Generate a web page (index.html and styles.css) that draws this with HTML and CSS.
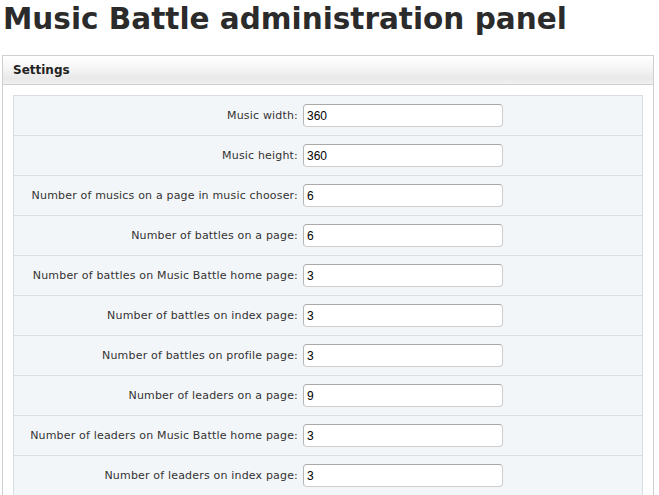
FILE: index.html
```html
<!DOCTYPE html>
<html lang="en">
<head>
    <meta charset="UTF-8">
    <title>Music Battle administration panel</title>
    <link rel="stylesheet" href="styles.css">
</head>
<body>

<h1 class="titulo">Music Battle administration panel</h1>

<div class="panel">
    <div class="panel-cabecera">Settings</div>
    <div class="panel-cuerpo">
        <div class="tabla">
            <div class="fila">
                <label for="w">Music width:</label>
                <input type="text" id="w" value="360">
            </div>
            <div class="fila">
                <label for="h">Music height:</label>
                <input type="text" id="h" value="360">
            </div>
            <div class="fila">
                <label for="c1">Number of musics on a page in music chooser:</label>
                <input type="text" id="c1" value="6">
            </div>
            <div class="fila">
                <label for="c2">Number of battles on a page:</label>
                <input type="text" id="c2" value="6">
            </div>
            <div class="fila">
                <label for="c3">Number of battles on Music Battle home page:</label>
                <input type="text" id="c3" value="3">
            </div>
            <div class="fila">
                <label for="c4">Number of battles on index page:</label>
                <input type="text" id="c4" value="3">
            </div>
            <div class="fila">
                <label for="c5">Number of battles on profile page:</label>
                <input type="text" id="c5" value="3">
            </div>
            <div class="fila">
                <label for="c6">Number of leaders on a page:</label>
                <input type="text" id="c6" value="9">
            </div>
            <div class="fila">
                <label for="c7">Number of leaders on Music Battle home page:</label>
                <input type="text" id="c7" value="3">
            </div>
            <div class="fila">
                <label for="c8">Number of leaders on index page:</label>
                <input type="text" id="c8" value="3">
            </div>
        </div>
    </div>
</div>

</body>
</html>
```

FILE: styles.css
```css
body {
    font-family: "DejaVu Sans", Verdana, sans-serif;
    margin: 0;
    padding: 0 2px;
    background-color: white;
    color: #333;
}
.titulo {
    font-size: 29.5px;
    line-height: 34px;
    margin: 0 0 19px 1px;
    padding-top: 2px;
    color: #2b2b2b;
}
.panel {
    border: 1px solid #cfcfcf;
    width: 650px;
}
.panel-cabecera {
    height: 28px;
    line-height: 28px;
    padding-left: 10px;
    font-size: 12px;
    font-weight: bold;
    color: #222;
    border-bottom: 1px solid #cfcfcf;
    background: linear-gradient(to bottom, #ffffff 0%, #f6f6f6 40%, #e9e9e9 80%, #f1f1f1 100%);
}
.panel-cuerpo {
    padding: 10px;
}
.tabla {
    border: 1px solid #d6dce1;
    background-color: #f3f6f9;
}
.fila {
    display: grid;
    grid-template-columns: 284px 200px;
    column-gap: 5px;
    align-items: center;
    height: 39px;
    border-bottom: 1px solid #d9dfe4;
}
.fila label {
    text-align: right;
    font-size: 11px;
    letter-spacing: 0.18px;
    color: #333;
}
.fila input {
    box-sizing: border-box;
    width: 200px;
    height: 23px;
    padding: 0 3px;
    font-family: "Liberation Sans", Arial, sans-serif;
    font-size: 12px;
    color: #000;
    background: white;
    border: 1px solid #cfcfcf;
    border-top-color: #a9a9a9;
    border-left-color: #b5b5b5;
    border-radius: 4px;
}
```
